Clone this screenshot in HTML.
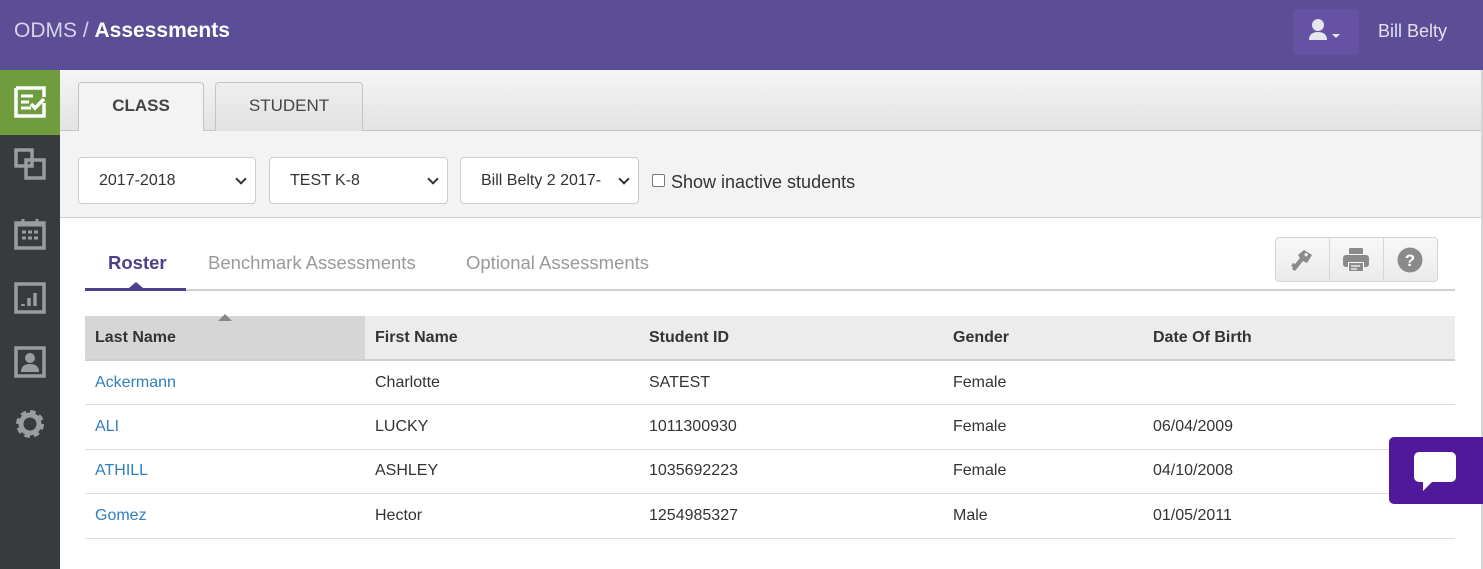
<!DOCTYPE html>
<html><head><meta charset="utf-8"><style>
*{box-sizing:border-box;margin:0;padding:0}
body{width:1483px;height:569px;overflow:hidden;font-family:"Liberation Sans",Arial,sans-serif;background:#fff;position:relative}
.hdr{position:absolute;left:0;top:0;width:1483px;height:70px;background:#5b4d96}
.hdr .t{position:absolute;left:14px;top:19px;font-size:21px;color:#fff;font-weight:bold}
.hdr .t span{color:#d8d3ea;font-weight:normal}
.ub{position:absolute;left:1293px;top:9px;width:66px;height:46px;background:#6552a3;border-radius:3px}
.bb{position:absolute;left:1378px;top:21px;color:#e4e0f0;font-size:18px}
.side{position:absolute;left:0;top:70px;width:60px;height:499px;background:#373b3e}
.side .act{position:absolute;left:0;top:0;width:60px;height:65px;background:#6f9c3d}
.side svg{position:absolute;left:14px}
.tabs{position:absolute;left:60px;top:70px;width:1421px;height:61px;background:linear-gradient(#f5f5f5,#e3e3e3);border-bottom:1px solid #c8c8c8}
.tab{position:absolute;top:12px;height:50px;border:1px solid #c4c4c4;border-bottom:none;border-radius:4px 4px 0 0;font-size:17px;text-align:center;line-height:46px;color:#444}
.filt{position:absolute;left:60px;top:131px;width:1421px;height:87px;background:#f3f3f3;border-bottom:1px solid #ccc}
.sel{position:absolute;top:26px;height:47px;background:#fff;border:1px solid #ccc;border-radius:4px;font-size:16px;color:#333;padding:14px 0 0 20px}
.sel:after{content:"";position:absolute;right:10px;top:17px;width:6px;height:6px;border-right:2px solid #333;border-bottom:2px solid #333;transform:rotate(45deg)}
.chk{position:absolute;left:592px;top:41px;font-size:18px;color:#333}
.chk i{display:inline-block;width:13px;height:13px;border:1px solid #777;border-radius:2px;vertical-align:1px;margin-right:6px;background:#fff}
.edge{position:absolute;left:1481px;top:70px;width:2px;height:499px;background:#d4d4d4}
.st{position:absolute;top:252px;font-size:18.5px;color:#999}
.stl{position:absolute;left:85px;top:289px;width:1370px;height:2px;background:#cfcfcf}
.sta{position:absolute;left:85px;top:288px;width:101px;height:3px;background:#4f3f8c}
.tri{position:absolute;left:129px;top:282px;width:0;height:0;border-left:7px solid transparent;border-right:7px solid transparent;border-bottom:6px solid #4f3f8c}
.btns{position:absolute;left:1275px;top:237px;width:163px;height:45px;border:1px solid #d4d4d4;border-radius:4px;background:linear-gradient(#f8f8f8,#ebebeb)}
.btns div{position:absolute;top:0;width:1px;height:43px;background:#d6d6d6}
table{position:absolute;left:85px;top:316px;width:1370px;border-collapse:collapse;font-size:16px;color:#333}
th{background:#ececec;height:44px;text-align:left;padding-left:10px;font-weight:bold;border-bottom:2px solid #cfcfcf}
th.s{background:#d6d6d6;position:relative}
td{height:44.5px;padding-left:10px;border-bottom:1px solid #ddd}
td a{color:#2f7fc1}
.chat{position:absolute;left:1389px;top:437px;width:94px;height:67px;background:#50189a;border-radius:5px 0 0 5px}
</style></head><body>
<div class="hdr"><div class="t"><span>ODMS / </span>Assessments</div>
<div class="ub"><svg width="66" height="46"><circle cx="25" cy="16" r="6" fill="#e6e6ee"/><path d="M16 31c0-6 4-8 9-8s9 2 9 8z" fill="#e6e6ee"/><path d="M39 25h8l-4 4z" fill="#e6e6ee"/></svg></div>
<div class="bb">Bill Belty</div></div>
<div class="side"><div class="act"></div>
<svg style="top:16px" width="32" height="32"><path d="M2 2h28v9M30 17v13H2V2" stroke="#fff" stroke-width="3.5" fill="none"/><path d="M7 10h12M7 16h8M7 22h10" stroke="#fff" stroke-width="3"/><path d="M17 18l4 4 9-9" stroke="#fff" stroke-width="3.5" fill="none"/></svg>
<svg style="top:78px" width="32" height="32"><path d="M2 2h16v16H2zM12 12h18v18H12z" stroke="#9a9c9e" stroke-width="3.5" fill="none"/></svg>
<svg style="top:148px" width="32" height="32"><path d="M2 5h28v25H2z" stroke="#9a9c9e" stroke-width="3.5" fill="none"/><path d="M2 6h28" stroke="#9a9c9e" stroke-width="5"/><path d="M8 14h4M14 14h4M20 14h4M8 20h4M14 20h4M20 20h4" stroke="#9a9c9e" stroke-width="3"/><path d="M9 1v5M23 1v5" stroke="#9a9c9e" stroke-width="3"/></svg>
<svg style="top:212px" width="32" height="32"><path d="M2 2h28v28H2z" stroke="#9a9c9e" stroke-width="3.5" fill="none"/><path d="M9 22v2M15 16v8M21 11v13" stroke="#9a9c9e" stroke-width="3.5"/></svg>
<svg style="top:276px" width="32" height="32"><path d="M2 2h28v28H2z" stroke="#9a9c9e" stroke-width="3.5" fill="none"/><circle cx="16" cy="12" r="5" fill="#9a9c9e"/><path d="M7 26c0-6 4-8 9-8s9 2 9 8z" fill="#9a9c9e"/></svg>
<svg style="top:338px" width="32" height="32"><circle cx="16" cy="16" r="11" fill="none" stroke="#9a9c9e" stroke-width="6" stroke-dasharray="5 3.6"/><circle cx="16" cy="16" r="9" fill="none" stroke="#9a9c9e" stroke-width="5"/></svg>
</div>
<div class="tabs">
<div class="tab" style="left:18px;width:126px;background:#f3f3f3;height:50px;font-weight:bold">CLASS</div>
<div class="tab" style="left:155px;width:148px;background:linear-gradient(#eee,#e2e2e2)">STUDENT</div>
</div>
<div class="filt">
<div class="sel" style="left:18px;width:178px">2017-2018</div>
<div class="sel" style="left:209px;width:179px">TEST K-8</div>
<div class="sel" style="left:400px;width:179px">Bill Belty 2 2017-</div>
<div class="chk"><i></i>Show inactive students</div>
</div>
<div class="edge"></div>
<div class="st" style="left:108px;color:#4f3f8c;font-weight:bold">Roster</div>
<div class="st" style="left:208px">Benchmark Assessments</div>
<div class="st" style="left:466px">Optional Assessments</div>
<div class="stl"></div><div class="sta"></div><div class="tri"></div>
<div class="btns"><div style="left:53px"></div><div style="left:107px"></div>
<svg style="position:absolute;left:13px;top:8px" width="28" height="28"><path d="M15 4l8 5-5 8-4-2-8 10-3-2 1-2-2-1 2-3 2 1 5-6-2-3z" fill="#8a8a8a"/><rect x="16" y="7" width="3" height="3" fill="#f4f4f4" transform="rotate(32 17 8)"/></svg>
<svg style="position:absolute;left:66px;top:9px" width="28" height="26"><rect x="7" y="1" width="14" height="6" rx="1" fill="#8a8a8a"/><rect x="1" y="8" width="26" height="12" rx="3" fill="#8a8a8a"/><rect x="6" y="15" width="16" height="9" fill="#fff"/><rect x="7" y="16" width="14" height="8" fill="#8a8a8a"/><path d="M9 19h9M9 22h6" stroke="#fff" stroke-width="1.3"/></svg>
<svg style="position:absolute;left:121px;top:9px" width="26" height="26"><circle cx="13" cy="13" r="12.5" fill="#8a8a8a"/><text x="13" y="19" text-anchor="middle" font-size="17" font-weight="bold" fill="#fff" font-family="Liberation Sans">?</text></svg>
</div>
<table>
<tr><th class="s" style="width:280px">Last Name<span style="position:absolute;left:133px;top:-2px;border-left:7px solid transparent;border-right:7px solid transparent;border-bottom:7px solid #888"></span></th><th style="width:274px">First Name</th><th style="width:304px">Student ID</th><th style="width:200px">Gender</th><th>Date Of Birth</th></tr>
<tr><td><a>Ackermann</a></td><td>Charlotte</td><td>SATEST</td><td>Female</td><td></td></tr>
<tr><td><a>ALI</a></td><td>LUCKY</td><td>1011300930</td><td>Female</td><td>06/04/2009</td></tr>
<tr><td><a>ATHILL</a></td><td>ASHLEY</td><td>1035692223</td><td>Female</td><td>04/10/2008</td></tr>
<tr><td><a>Gomez</a></td><td>Hector</td><td>1254985327</td><td>Male</td><td>01/05/2011</td></tr>
</table>
<div class="chat"><svg style="position:absolute;left:24px;top:14px" width="46" height="42"><rect x="1" y="1" width="42" height="30" rx="5" fill="#fff"/><path d="M10 30v10l10-10z" fill="#fff"/></svg></div>
</body></html>
